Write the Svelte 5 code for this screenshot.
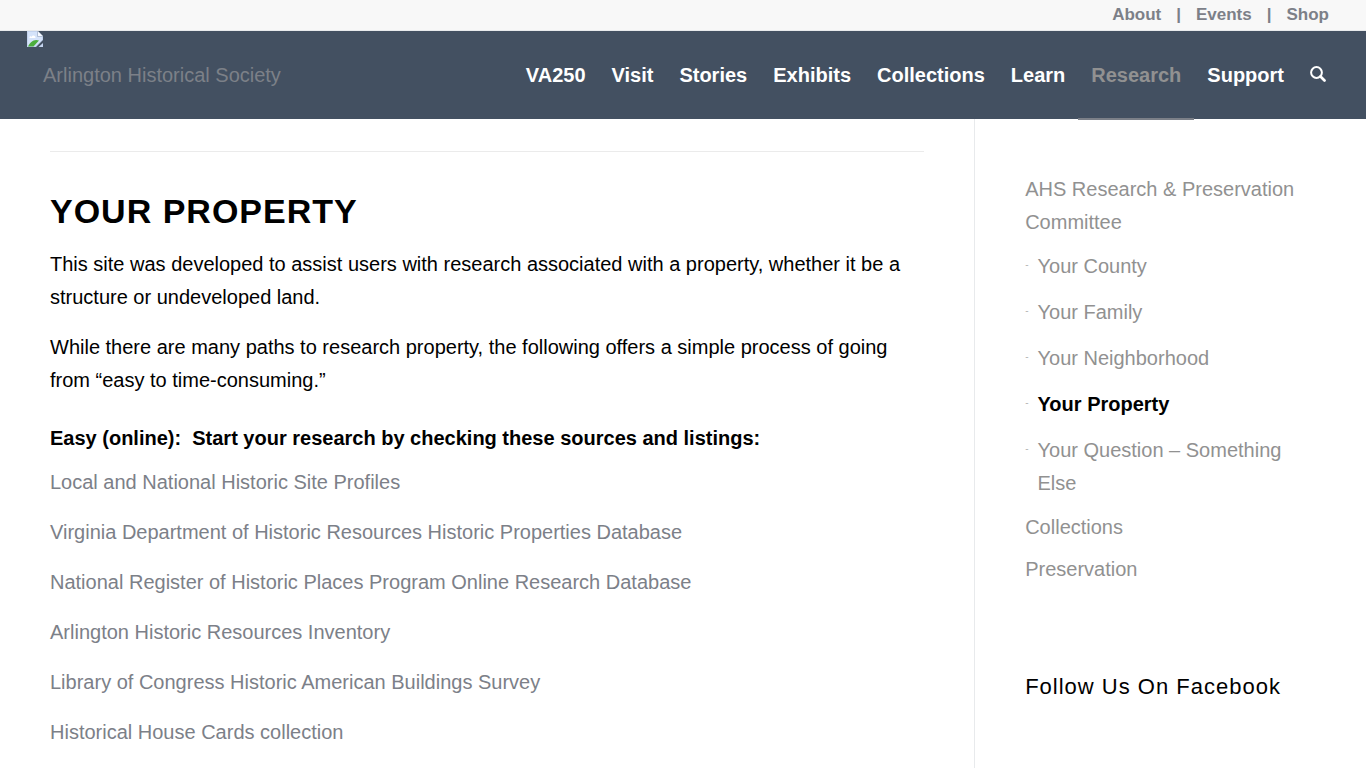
<script lang="ts">
  const metaLinks = ['About', 'Events', 'Shop']

  const navItems = ['VA250', 'Visit', 'Stories', 'Exhibits', 'Collections', 'Learn', 'Research', 'Support']
  const currentNav = 'Research'

  const sources = [
    'Local and National Historic Site Profiles',
    'Virginia Department of Historic Resources Historic Properties Database',
    'National Register of Historic Places Program Online Research Database',
    'Arlington Historic Resources Inventory',
    'Library of Congress Historic American Buildings Survey',
    'Historical House Cards collection',
  ]

  const sideItems = [
    {
      label: 'AHS Research & Preservation Committee',
      children: ['Your County', 'Your Family', 'Your Neighborhood', 'Your Property', 'Your Question – Something Else'],
    },
    { label: 'Collections', children: [] },
    { label: 'Preservation', children: [] },
  ]
  const currentPage = 'Your Property'
</script>

<div class="meta-bar">
  <nav aria-label="Secondary">
    <ul class="meta-list">
      {#each metaLinks as link}
        <li><a href="#top">{link}</a></li>
      {/each}
    </ul>
  </nav>
</div>

<header class="header">
  <a class="logo" href="#top">
    <svg class="logo-icon" width="16" height="16" viewBox="0 0 16 16" aria-hidden="true">
      <path d="M0 0h11l5 5v4l-7 7H0z" fill="#c3d3ee" />
      <path d="M1 1h9v5h5v3l-7 6H1z" fill="#d5e3fa" />
      <path d="M2.500 7c0-2 1.500-2 2-1C5 3.500 9 4 8.500 7z" fill="#fff" />
      <path d="M10.500 0L16 5.500h-5.500z" fill="#f6f9ff" />
      <path d="M10.500 0v5.500H16" fill="none" stroke="#a9b8ce" stroke-width="0.800" />
      <path d="M1 15.500C3 11 7 7.500 12 9.500L6.500 15.500z" fill="#4cae3d" />
      <path d="M11.500 16L16 12v4z" fill="#c3d3ee" />
    </svg>
    <span>Arlington Historical Society</span>
  </a>
  <nav aria-label="Main">
    <ul class="nav-list">
      {#each navItems as item}
        <li>
          <a href="#top" class:active={item === currentNav} aria-current={item === currentNav ? 'true' : undefined}>{item}</a>
        </li>
      {/each}
      <li>
        <button class="search" aria-label="Search">
          <svg width="16" height="16" viewBox="0 0 16 16" fill="none" stroke="#fff" aria-hidden="true">
            <circle cx="6.500" cy="6.500" r="5.400" stroke-width="2" />
            <path d="M10.500 10.500L14.500 14.500" stroke-width="2.700" stroke-linecap="round" />
          </svg>
        </button>
      </li>
    </ul>
  </nav>
</header>

<div class="container">
  <main class="content">
    <hr />
    <h1>YOUR PROPERTY</h1>
    <p>This site was developed to assist users with research associated with a property, whether it be a structure or undeveloped land.</p>
    <p>While there are many paths to research property, the following offers a simple process of going from “easy to time-consuming.”</p>
    <h2>Easy (online):&nbsp; Start your research by checking these sources and listings:</h2>
    {#each sources as source}
      <p><a href="#top">{source}</a></p>
    {/each}
  </main>

  <aside class="sidebar">
    <nav aria-label="Research pages">
      <ul class="side-list">
        {#each sideItems as item}
          <li>
            <a href="#top">{item.label}</a>
            {#if item.children.length}
              <ul class="sub-list">
                {#each item.children as child}
                  <li>
                    <a href="#top" class:current={child === currentPage} aria-current={child === currentPage ? 'page' : undefined}>{child}</a>
                  </li>
                {/each}
              </ul>
            {/if}
          </li>
        {/each}
      </ul>
    </nav>
    <h3>Follow Us On Facebook</h3>
  </aside>
</div>

<style>
  :global(body) {
    margin: 0;
    background: #fff;
    color: #000;
    font: 20px/33px 'Liberation Sans', Arial, sans-serif;
  }
  ul {
    list-style: none;
    margin: 0;
    padding: 0;
  }
  a {
    color: #7c8088;
    text-decoration: none;
  }

  .meta-bar {
    display: flex;
    justify-content: flex-end;
    padding: 0 37px 1px;
    background: #f8f8f8;
    border-bottom: 1px solid #e8eaec;
    font-size: 17px;
    font-weight: bold;
    line-height: 29px;
    color: #7c8088;
  }
  .meta-list {
    display: flex;
  }
  .meta-list li + li::before {
    content: '|';
    margin: 0 15px;
  }

  .header {
    display: flex;
    justify-content: space-between;
    padding: 0 40px 0 27px;
    background: #435061;
    line-height: 88px;
  }
  .logo {
    display: flex;
    align-items: flex-start;
  }
  .nav-list {
    display: flex;
  }
  .nav-list a {
    display: block;
    position: relative;
    padding: 0 13px;
    color: #fff;
    font-weight: bold;
  }
  .nav-list a.active {
    color: #919191;
  }
  .nav-list a.active::after {
    content: '';
    position: absolute;
    right: 0;
    bottom: -1px;
    left: 0;
    height: 2px;
    background: #7c8088;
  }
  .search {
    display: flex;
    align-items: center;
    height: 86px;
    margin-left: 13px;
    padding: 0;
    border: 0;
    background: none;
    cursor: pointer;
  }

  .container {
    display: grid;
    grid-template-columns: 73fr 27fr;
    padding: 0 50px;
  }
  .content {
    padding: 32px 50px 0 0;
  }
  hr {
    margin: 0 0 40px;
    border: 0;
    border-top: 1px solid #ebebeb;
  }
  h1 {
    margin: 0 0 17px;
    font-size: 34px;
    line-height: 39px;
    letter-spacing: 1px;
  }
  p {
    margin: 0 0 17px;
  }
  .content p:last-child {
    margin-bottom: 20px;
  }
  h2 {
    margin: 25px 0 11px;
    font-size: 20px;
    line-height: 33px;
  }

  .sidebar {
    padding: 50px 0 0 50px;
    border-left: 1px solid #e8eaec;
  }
  .side-list a {
    display: block;
    padding: 4px 0 5px;
    color: #919191;
  }
  .sub-list li {
    display: flex;
    gap: 9px;
  }
  .sub-list li::before {
    content: '-';
    padding-top: 4px;
    color: #b5b5b5;
    font-size: 10px;
  }
  .sub-list a {
    padding: 6px 0 7px;
  }
  .sub-list a.current {
    color: #000;
    font-weight: bold;
  }
  h3 {
    margin: 84px 0 0;
    font-size: 22px;
    font-weight: normal;
    line-height: 24px;
    letter-spacing: 1px;
  }
</style>
